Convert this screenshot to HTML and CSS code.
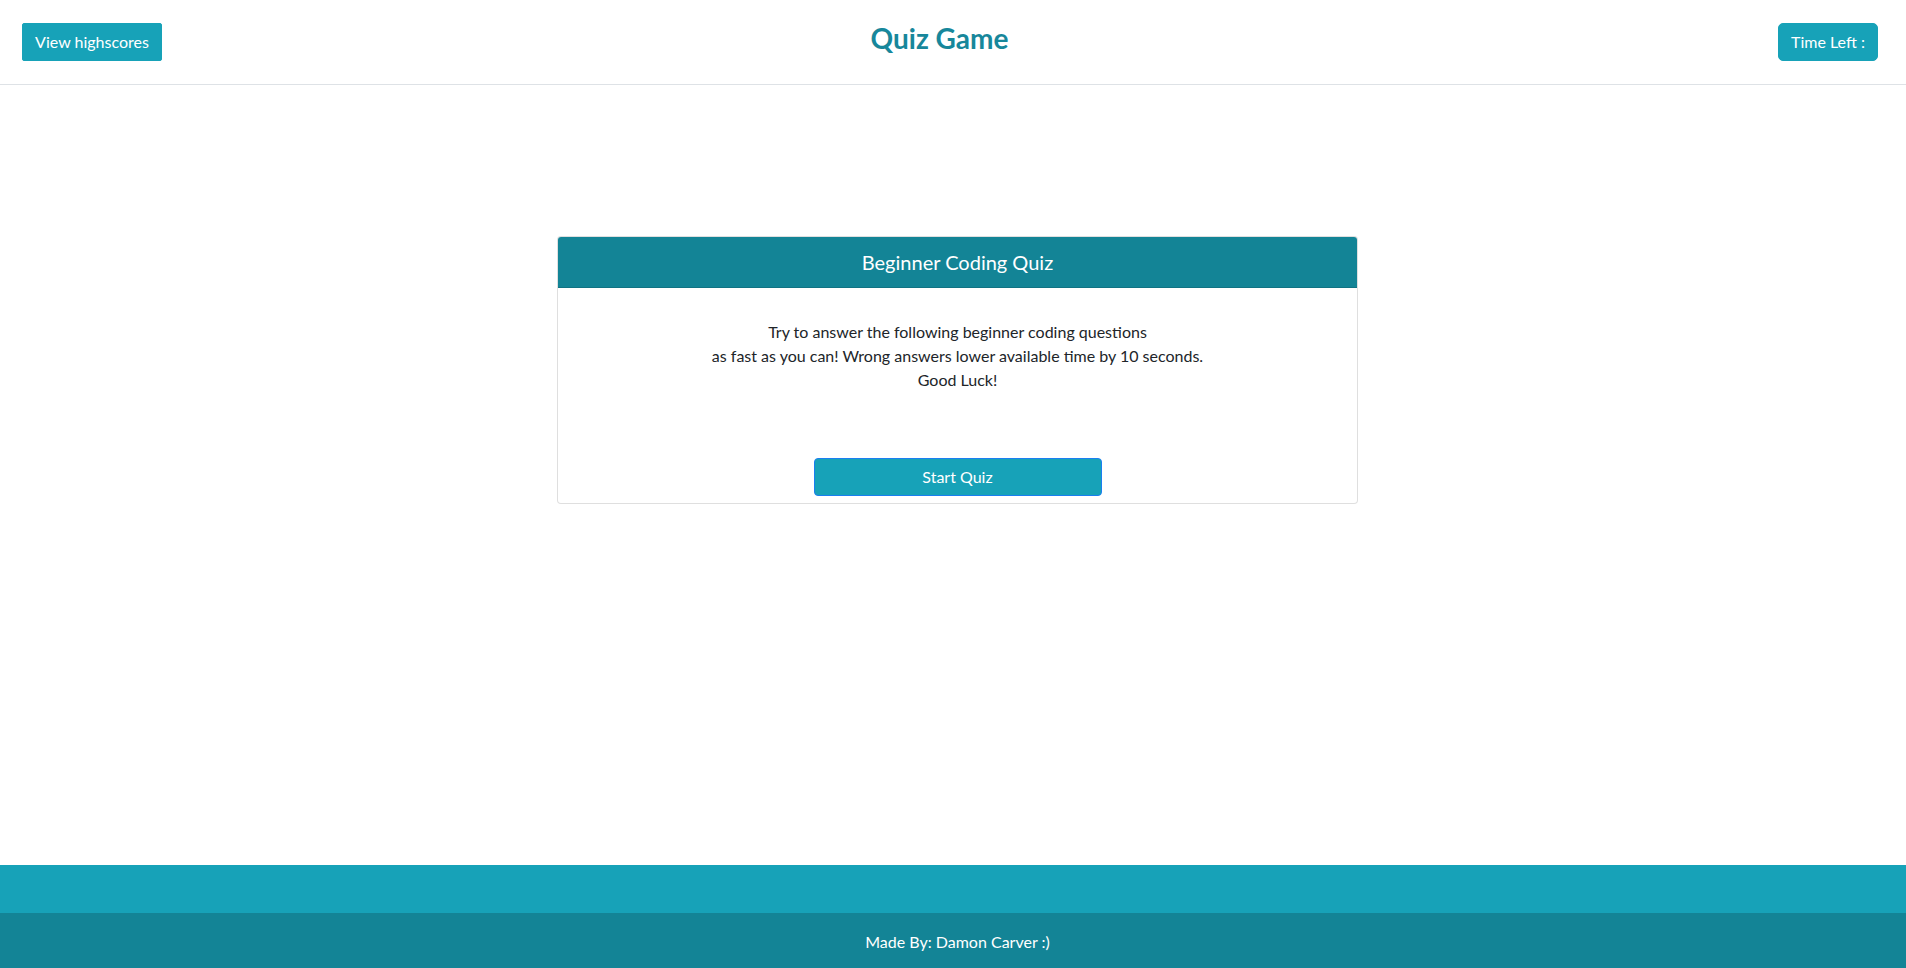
FILE: index.html
```html
<!DOCTYPE html>
<html lang="en">
<head>
<meta charset="utf-8">
<title>Quiz Game</title>
<link rel="stylesheet" href="styles.css">
</head>
<body>
<header class="topbar">
  <button class="btn btn-scores">View highscores</button>
  <h1 class="title">Quiz Game</h1>
  <button class="btn btn-time">Time Left :</button>
</header>
<main class="main">
  <section class="card">
    <div class="card-header">Beginner Coding Quiz</div>
    <div class="card-body">
      <p class="intro">Try to answer the following beginner coding questions<br>as fast as you can! Wrong answers lower available time by 10 seconds.<br>Good Luck!</p>
      <button class="btn btn-start">Start Quiz</button>
    </div>
  </section>
</main>
<footer class="footer">
  <div class="footer-band"></div>
  <div class="footer-credit">Made By: Damon Carver :)</div>
</footer>
</body>
</html>
```
FILE: styles.css
```css
* { box-sizing: border-box; }
html, body { height: 100%; }
body {
  margin: 0;
  font-family: Lato, "Open Sans", sans-serif;
  font-size: 16px;
  line-height: 1.5;
  color: #212529;
  background: #fff;
  display: flex;
  flex-direction: column;
  min-height: 100vh;
}
.btn {
  font-family: inherit;
  font-size: 16px;
  line-height: 24px;
  height: 38px;
  padding: 6px 12px;
  color: #fff;
  background: #17a2b8;
  border: 1px solid #17a2b8;
  white-space: nowrap;
  cursor: pointer;
}
.topbar {
  display: grid;
  grid-template-columns: 1fr auto 1fr;
  align-items: center;
  height: 85px;
  padding: 0 28px 0 22px;
  border-bottom: 1px solid #dee2e6;
}
.btn-scores { justify-self: start; border-radius: 2px; min-width: 140px; }
.btn-time { justify-self: end; border-radius: 5px; min-width: 99px; }
.title {
  margin: 0 21px 6px 0;
  font-size: 28px;
  font-weight: 700;
  line-height: 1.2;
  color: #17879b;
}
.main {
  flex: 1;
  display: flex;
  justify-content: center;
  align-items: flex-start;
  padding: 151px 0 0 9px;
}
.card {
  width: 801px;
  border: 1px solid rgba(0, 0, 0, 0.125);
  border-radius: 4px;
  overflow: hidden;
  background: #fff;
}
.card-header {
  background: #138496;
  color: #fff;
  font-size: 20px;
  line-height: 30px;
  padding: 10px 20px;
  text-align: center;
  border-bottom: 1px solid rgba(0, 0, 0, 0.125);
}
.card-body {
  padding: 32px 20px 7px;
  display: flex;
  flex-direction: column;
  align-items: center;
}
.intro {
  margin: 0 0 66px;
  text-align: center;
  line-height: 24px;
}
.btn-start {
  width: 288px;
  border-radius: 4px;
  border-color: #1a7ff0;
}
.footer-band {
  height: 48px;
  background: #17a2b8;
}
.footer-credit {
  background: #138496;
  color: #fff;
  text-align: center;
  height: 55px;
  padding: 17px 0 0 9px;
  line-height: 24px;
}
```
